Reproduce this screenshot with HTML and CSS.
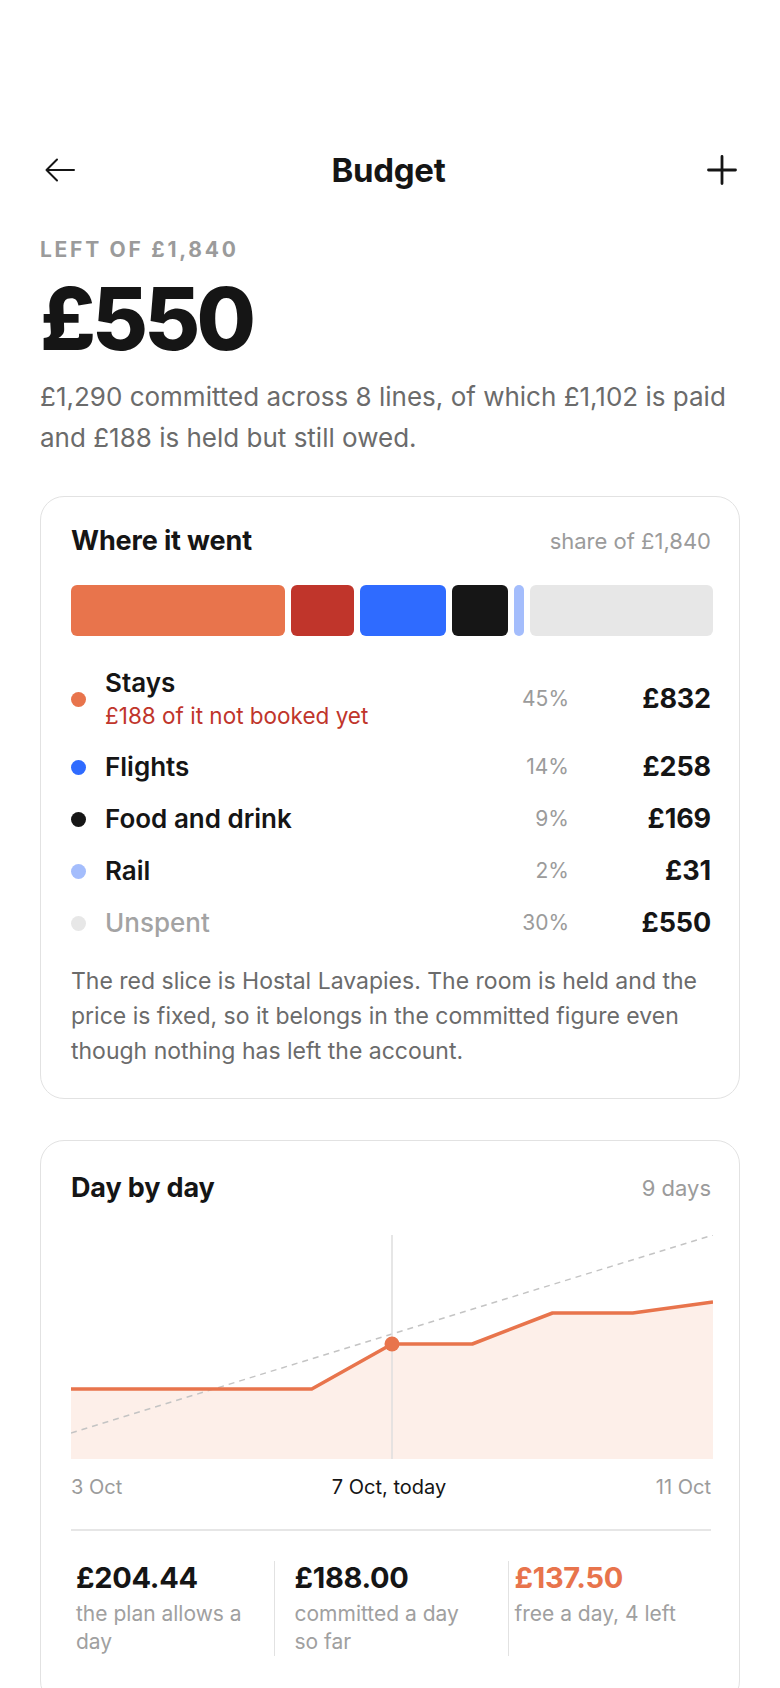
FILE: index.html
```html
<!DOCTYPE html>
<html lang="en">
<head>
  <meta charset="UTF-8" />
  <meta name="viewport" content="width=device-width, initial-scale=1.0" />
  <title>Budget</title>
  <link rel="stylesheet" href="styles.css">
</head>
<body>
  <div class="page">
    <header class="topbar">
      <button class="icon-btn" aria-label="Back">
        <svg width="30" height="24" viewBox="0 0 30 24" fill="none" stroke="#151515" stroke-width="2" stroke-linecap="round" stroke-linejoin="round">
          <path d="M29 12H1.5M12 1.5L1.5 12L12 22.5" />
        </svg>
      </button>
      <h1 class="title">Budget</h1>
      <button class="icon-btn add" aria-label="Add">
        <svg width="30" height="30" viewBox="0 0 30 30" fill="none" stroke="#151515" stroke-width="2.8" stroke-linecap="round">
          <path d="M15 1.5V28.5M1.5 15H28.5" />
        </svg>
      </button>
    </header>

    <div class="eyebrow">Left of £1,840</div>
    <div class="big">£550</div>
    <p class="summary">£1,290 committed across 8 lines, of which £1,102 is paid and £188 is held but still owed.</p>

    <section class="card">
      <div class="card-head">
        <h2>Where it went</h2>
        <span class="muted">share of £1,840</span>
      </div>

      <div class="bar">
        <span class="seg stays" style="flex-grow: 644"></span>
        <span class="seg held" style="flex-grow: 188"></span>
        <span class="seg flights" style="flex-grow: 258"></span>
        <span class="seg food" style="flex-grow: 169"></span>
        <span class="seg rail" style="flex-grow: 31"></span>
        <span class="seg unspent" style="flex-grow: 550"></span>
      </div>

      <div class="legend">
        <div class="row">
          <span class="dot stays"></span>
          <div class="name">
            Stays
            <div class="note">£188 of it not booked yet</div>
          </div>
          <span class="pct">45%</span>
          <span class="amt">£832</span>
        </div>
        <div class="row">
          <span class="dot flights"></span>
          <div class="name">Flights</div>
          <span class="pct">14%</span>
          <span class="amt">£258</span>
        </div>
        <div class="row">
          <span class="dot food"></span>
          <div class="name">Food and drink</div>
          <span class="pct">9%</span>
          <span class="amt">£169</span>
        </div>
        <div class="row">
          <span class="dot rail"></span>
          <div class="name">Rail</div>
          <span class="pct">2%</span>
          <span class="amt">£31</span>
        </div>
        <div class="row">
          <span class="dot unspent"></span>
          <div class="name faded">Unspent</div>
          <span class="pct">30%</span>
          <span class="amt">£550</span>
        </div>
      </div>

      <p class="footnote">The red slice is Hostal Lavapies. The room is held and the price is fixed, so it belongs in the committed figure even though nothing has left the account.</p>
    </section>

    <section class="card trend">
      <div class="card-head">
        <h2>Day by day</h2>
        <span class="muted">9 days</span>
      </div>

      <svg class="chart" viewBox="0 0 642 224" preserveAspectRatio="none">
        <path d="M0 154H240.75L321 109H401.25L481.5 78H561.75L642 67V224H0Z" fill="#fdefe9" />
        <path d="M0 198L642 0" stroke="#c4c4c4" stroke-width="1.5" stroke-dasharray="6 5" fill="none" />
        <path d="M321 0V224" stroke="#dedede" stroke-width="1.5" />
        <path d="M0 154H240.75L321 109H401.25L481.5 78H561.75L642 67" stroke="#e8744c" stroke-width="3.5" fill="none" stroke-linejoin="round" />
        <circle cx="321" cy="109" r="7.5" fill="#e8744c" />
      </svg>

      <div class="axis">
        <span>3 Oct</span>
        <span class="today">7 Oct, today</span>
        <span>11 Oct</span>
      </div>

      <div class="stats">
        <div class="stat">
          <div class="stat-value">£204.44</div>
          <div class="stat-label">the plan allows a day</div>
        </div>
        <div class="stat">
          <div class="stat-value">£188.00</div>
          <div class="stat-label">committed a day so far</div>
        </div>
        <div class="stat">
          <div class="stat-value accent">£137.50</div>
          <div class="stat-label">free a day, 4 left</div>
        </div>
      </div>
    </section>
  </div>
</body>
</html>
```

FILE: styles.css
```css
body {
  margin: 0;
  background: #fff;
  color: #151515;
  font-family: Inter, 'Noto Sans', sans-serif;
}

.page {
  padding: 140px 40px 40px;
}

.topbar {
  height: 60px;
  display: flex;
  align-items: center;
  justify-content: space-between;
}

.icon-btn {
  width: 40px;
  height: 40px;
  padding: 0;
  border: none;
  background: none;
  display: flex;
  align-items: center;
  justify-content: center;
}

.icon-btn.add {
  justify-content: flex-end;
  margin-right: 3px;
}

.title {
  margin: 0;
  font-size: 33px;
  font-weight: 700;
  letter-spacing: -0.01em;
}

.eyebrow {
  margin-top: 38px;
  font-size: 21px;
  line-height: 24px;
  font-weight: 700;
  letter-spacing: 0.13em;
  text-transform: uppercase;
  color: #9b9b9b;
}

.big {
  margin-top: 14px;
  font-size: 86px;
  line-height: 86px;
  font-weight: 800;
  letter-spacing: -0.045em;
}

.summary {
  margin: 14px 0 0;
  font-size: 26px;
  line-height: 41px;
  color: #6b6b6b;
}

.card {
  margin-top: 38px;
  border: 1px solid #e2e2e2;
  border-radius: 24px;
  padding: 28px 28px 29px 30px;
}

.card.trend {
  margin-top: 41px;
  padding-top: 31px;
  padding-bottom: 48px;
}

.card-head {
  display: flex;
  align-items: center;
  justify-content: space-between;
}

.card-head h2 {
  margin: 0;
  font-size: 27px;
  line-height: 32px;
  font-weight: 700;
  letter-spacing: -0.005em;
}

.muted {
  font-size: 22px;
  color: #9b9b9b;
}

.bar {
  margin: 28px -2px 0 0;
  height: 51px;
  display: flex;
  gap: 6px;
}

.seg {
  flex-basis: 0;
  border-radius: 6px;
}

.stays { background: #e8744c; }
.held { background: #c0352b; }
.flights { background: #2f6bff; }
.food { background: #161616; }
.rail { background: #a4bdfc; }
.unspent { background: #e7e7e7; }

.legend {
  margin-top: 32px;
  display: flex;
  flex-direction: column;
  gap: 22px;
}

.row {
  display: grid;
  grid-template-columns: 15px 1fr 80px 123px;
  column-gap: 19px;
  align-items: center;
}

.dot {
  width: 15px;
  height: 15px;
  border-radius: 50%;
}

.name {
  font-size: 26px;
  line-height: 30px;
  font-weight: 600;
}

.name.faded {
  color: #a3a3a3;
  font-weight: 500;
}

.note {
  margin-top: 4px;
  font-size: 22.5px;
  line-height: 28px;
  font-weight: 400;
  color: #c0352b;
}

.pct {
  text-align: right;
  font-size: 21px;
  line-height: 30px;
  color: #9b9b9b;
}

.amt {
  text-align: right;
  font-size: 27px;
  line-height: 30px;
  font-weight: 700;
  letter-spacing: -0.005em;
}

.footnote {
  margin: 26px 0 0;
  font-size: 23px;
  line-height: 35px;
  color: #6b6b6b;
}

.chart {
  display: block;
  width: calc(100% + 2px);
  height: 224px;
  margin-top: 31px;
}

.axis {
  margin-top: 16px;
  display: flex;
  justify-content: space-between;
  font-size: 20px;
  line-height: 24px;
  color: #9b9b9b;
}

.axis .today {
  color: #151515;
}

.stats {
  margin-top: 30px;
  padding-top: 30px;
  border-top: 2px solid #e6e6e6;
  display: grid;
  grid-template-columns: 1fr 1.16fr 1fr;
}

.stat {
  padding: 0 24px 0 5px;
}

.stat + .stat {
  border-left: 1px solid #e2e2e2;
}

.stat:nth-child(2) {
  padding-left: 20px;
}

.stat-value {
  font-size: 29px;
  line-height: 34px;
  font-weight: 700;
  letter-spacing: -0.01em;
}

.stat-value.accent {
  color: #e8744c;
}

.stat-label {
  margin-top: 5px;
  font-size: 21px;
  line-height: 28px;
  color: #a0a0a0;
}
```
